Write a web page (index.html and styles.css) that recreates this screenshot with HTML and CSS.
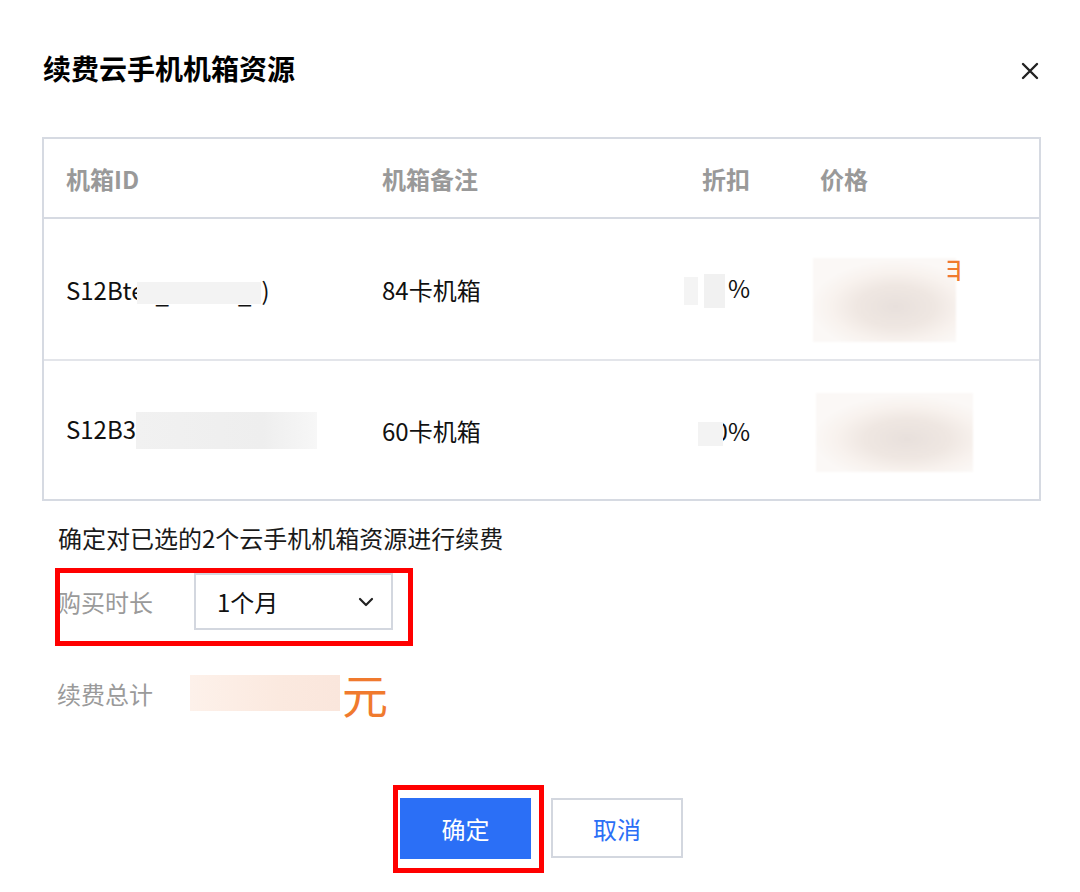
FILE: index.html
```html
<!DOCTYPE html>
<html lang="zh-CN">
<head>
    <meta charset="UTF-8">
    <meta name="viewport" content="width=device-width, initial-scale=1.0">
    <title>续费云手机机箱资源</title>
    <link rel="stylesheet" href="styles.css">
</head>
<body>
    <div class="dialog">
        <div class="dialog-header">
            <h2>续费云手机机箱资源</h2>
            <button class="close-btn" aria-label="关闭">
                <svg width="18" height="18" viewBox="0 0 18 18">
                    <path d="M2 2 L16 16 M16 2 L2 16" stroke="#222" stroke-width="2.4" stroke-linecap="round"/>
                </svg>
            </button>
        </div>

        <table class="box-table">
            <colgroup>
                <col class="col-id">
                <col class="col-note">
                <col class="col-discount">
                <col class="col-price">
            </colgroup>
            <thead>
                <tr>
                    <th>机箱ID</th>
                    <th>机箱备注</th>
                    <th class="num">折扣</th>
                    <th>价格</th>
                </tr>
            </thead>
            <tbody>
                <tr class="row-first">
                    <td>S12Bte<span class="mask mask-id1"><span>_</span><span>_</span></span>)</td>
                    <td>84卡机箱</td>
                    <td class="num"><span class="mask mask-d1"></span><span class="mask mask-d1b"></span>%</td>
                    <td>
                        <span class="price-wrap">
                            <span class="mask mask-price1"></span>
                            <span class="peek">月</span>
                        </span>
                    </td>
                </tr>
                <tr class="row-last">
                    <td>S12B3<span class="mask mask-id2"></span></td>
                    <td>60卡机箱</td>
                    <td class="num"><span class="mask mask-d2"></span>0%</td>
                    <td><span class="mask mask-price2"></span></td>
                </tr>
            </tbody>
        </table>

        <p class="confirm-text">确定对已选的2个云手机机箱资源进行续费</p>

        <div class="form-row duration-row">
            <label class="form-label">购买时长</label>
            <div class="select">
                <span>1个月</span>
                <svg width="16" height="10" viewBox="0 0 16 10">
                    <path d="M2 2 L8 8 L14 2" fill="none" stroke="#222" stroke-width="2.2" stroke-linecap="round" stroke-linejoin="round"/>
                </svg>
            </div>
        </div>

        <div class="form-row total-row">
            <label class="form-label">续费总计</label>
            <span class="mask mask-total"></span>
            <span class="yuan">元</span>
        </div>

        <div class="actions">
            <span class="ok-wrap"><button class="btn btn-primary">确定</button></span>
            <button class="btn btn-default">取消</button>
        </div>
    </div>
</body>
</html>
```

FILE: styles.css
```css
body {
    margin: 0;
    background-color: #fff;
    font-family: "Noto Sans CJK SC", "Noto Sans", sans-serif;
    color: #111;
}
.dialog {
    width: 1080px;
    height: 892px;
    box-sizing: border-box;
    padding: 50px 39px 0 42px;
}
.dialog-header {
    display: flex;
    justify-content: space-between;
    align-items: center;
    height: 36px;
    margin-bottom: 51px;
}
.dialog-header h2 {
    margin: 0 0 0 1px;
    font-size: 28px;
    line-height: 36px;
    font-weight: bold;
    color: #000;
}
.close-btn {
    display: flex;
    padding: 0;
    margin: 6px 2px 0 0;
    border: none;
    background: none;
    cursor: pointer;
}

.box-table {
    width: 999px;
    table-layout: fixed;
    border-collapse: separate;
    border-spacing: 0;
    border: 2px solid #d6dae2;
    font-size: 24px;
}
.col-id { width: 316px; }
.col-note { width: 300px; }
.col-discount { width: 138px; }
.col-price { width: 241px; }
.box-table th,
.box-table td {
    padding: 0 22px;
    text-align: left;
    vertical-align: middle;
    border-bottom: 2px solid #e3e5ea;
    white-space: nowrap;
}
.box-table th {
    height: 78px;
    font-weight: bold;
    color: #999;
    border-bottom-color: #d6dae2;
}
.box-table td {
    color: #111;
}
.row-first td {
    height: 140px;
}
.row-last td {
    height: 138px;
    border-bottom: none;
}
.box-table .num {
    text-align: right;
    padding-right: 48px;
}

.mask {
    display: inline-block;
    vertical-align: middle;
    background-color: #f2f2f2;
}
.mask-id1 {
    display: inline-flex;
    justify-content: space-between;
    align-items: flex-end;
    width: 124px;
    height: 22px;
    padding: 0 10px 0 18px;
    box-sizing: border-box;
    margin-left: -7px;
    line-height: 22px;
    color: #111;
    background-color: #f3f3f3;
}
.mask-id2 {
    width: 181px;
    height: 37px;
    margin-top: -4px;
    background: linear-gradient(90deg, #f1f1f1 0%, #eeeeee 70%, #f7f7f7 100%);
}
.mask-d1 {
    width: 14px;
    height: 28px;
    background-color: #f4f4f4;
}
.mask-d1b {
    width: 21px;
    height: 34px;
    margin: 0 3px 0 6px;
    background-color: #f1f1f1;
}
.mask-d2 {
    width: 25px;
    height: 24px;
    margin-right: -8px;
    position: relative;
    background-color: #f3f3f3;
}
.price-wrap {
    position: relative;
    top: 11px;
    display: inline-block;
    vertical-align: middle;
    margin-left: -7px;
}
.mask-price1,
.mask-price2 {
    position: relative;
    z-index: 1;
    filter: blur(1px);
    background: radial-gradient(ellipse 60% 55% at 58% 58%, #e8e0dc 0%, #efe7e2 45%, #f8f2ee 75%, #fbf8f6 100%);
}
.mask-price1 {
    display: block;
    width: 143px;
    height: 84px;
}
.mask-price2 {
    width: 157px;
    height: 79px;
    margin: 5px 0 0 -4px;
}
.peek {
    position: absolute;
    z-index: 2;
    right: -9px;
    top: -5px;
    font-size: 30px;
    line-height: 36px;
    color: #f07a2e;
    clip-path: inset(0 0 22% 42%);
}

.confirm-text {
    margin: 21px 0 0 16px;
    font-size: 24px;
    line-height: 32px;
    color: #1a1a1a;
}
.form-row {
    display: flex;
    align-items: center;
    margin-left: 15px;
}
.form-label {
    width: 137px;
    font-size: 24px;
    color: #9a9a9a;
}
.duration-row {
    position: relative;
    margin-top: 19px;
}
.duration-row::after {
    content: "";
    position: absolute;
    left: -2px;
    top: -5px;
    width: 358px;
    height: 78px;
    box-sizing: border-box;
    border: 5px solid #ff0000;
}
.select {
    display: flex;
    justify-content: space-between;
    align-items: center;
    width: 199px;
    height: 57px;
    box-sizing: border-box;
    padding: 0 17px 0 21px;
    border: 2px solid #d3d7df;
    font-size: 24px;
    color: #111;
}
.total-row {
    margin-top: 39px;
    height: 48px;
}
.mask-total {
    width: 150px;
    height: 36px;
    margin-left: -4px;
    filter: blur(0.6px);
    background: linear-gradient(90deg, #fdf1ea 0%, #fbe9df 60%, #fae6dc 100%);
}
.yuan {
    font-size: 46px;
    line-height: 48px;
    color: #f07a2e;
    margin-left: 2px;
}

.actions {
    display: flex;
    justify-content: center;
    gap: 20px;
    margin-top: 81px;
}
.ok-wrap {
    position: relative;
    display: inline-flex;
}
.ok-wrap::after {
    content: "";
    position: absolute;
    left: -7px;
    top: -13px;
    width: 151px;
    height: 88px;
    box-sizing: border-box;
    border: 5px solid #ff0000;
}
.btn {
    width: 131px;
    height: 61px;
    font-family: inherit;
    font-size: 24px;
    border-radius: 0;
    cursor: pointer;
}
.btn-primary {
    background-color: #2b6ff6;
    color: #fff;
    border: none;
}
.btn-default {
    width: 132px;
    height: 60px;
    background-color: #fff;
    color: #2b6ff6;
    border: 2px solid #d3d7df;
}
```
